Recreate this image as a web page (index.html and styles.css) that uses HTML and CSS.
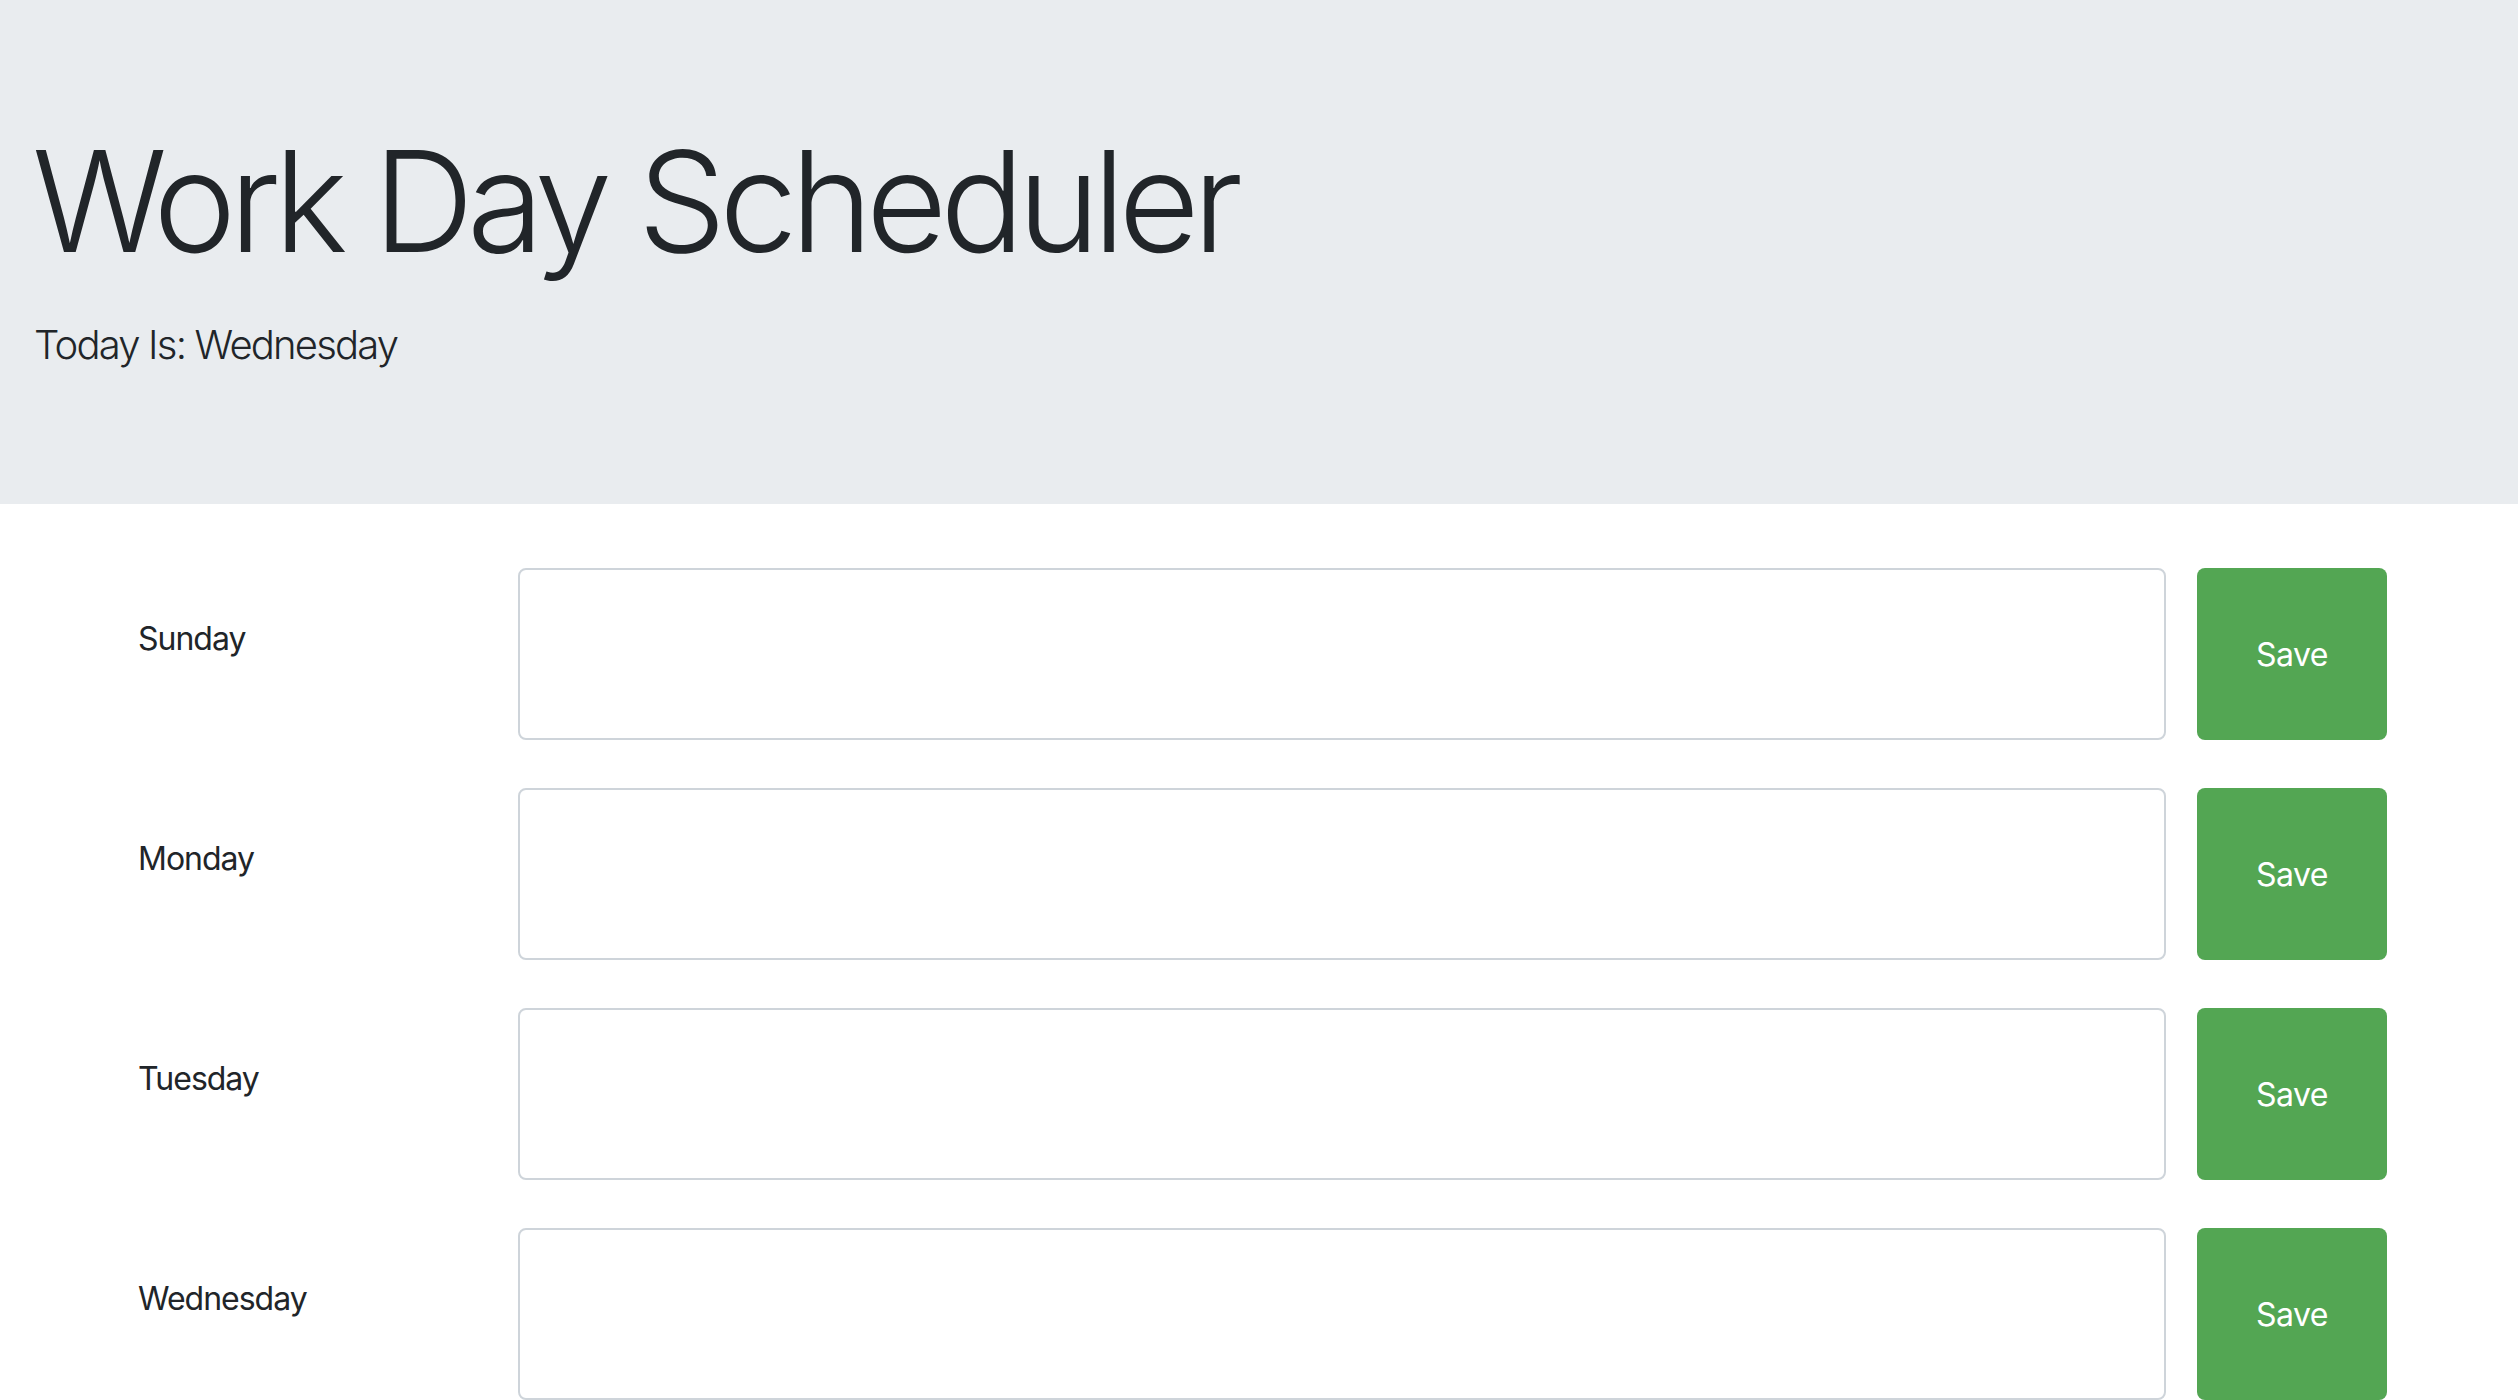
FILE: index.html
```html
<!DOCTYPE html>
<html lang="en">
<head>
<meta charset="utf-8">
<title>Work Day Scheduler</title>
<link rel="stylesheet" href="styles.css">
</head>
<body>
<header class="jumbotron">
  <h1 class="title">Work Day Scheduler</h1>
  <p class="lead">Today Is: Wednesday</p>
</header>
<main class="schedule">
  <div class="row">
    <div class="day">Sunday</div>
    <textarea class="entry"></textarea>
    <button class="save">Save</button>
  </div>
  <div class="row">
    <div class="day">Monday</div>
    <textarea class="entry"></textarea>
    <button class="save">Save</button>
  </div>
  <div class="row">
    <div class="day">Tuesday</div>
    <textarea class="entry"></textarea>
    <button class="save">Save</button>
  </div>
  <div class="row">
    <div class="day">Wednesday</div>
    <textarea class="entry"></textarea>
    <button class="save">Save</button>
  </div>
</main>
</body>
</html>
```

FILE: styles.css
```css
* { box-sizing: border-box; }
html, body { margin: 0; padding: 0; }
body {
  font-family: Inter, "Liberation Sans", sans-serif;
  color: #212529;
  background: #ffffff;
}
.jumbotron {
  background: #e9ecef;
  height: 504px;
  padding: 131px 0 0 32px;
}
.title {
  margin: 0;
  font-size: 140px;
  line-height: 140px;
  font-weight: 300;
  letter-spacing: -7px;
}
.lead {
  margin: 54px 0 0 2px;
  font-size: 40px;
  line-height: 40px;
  font-weight: 300;
  letter-spacing: -1.8px;
}
.schedule {
  padding: 64px 0 0 138px;
  display: flex;
  flex-direction: column;
  gap: 48px;
}
.row {
  display: grid;
  grid-template-columns: 380px 1648px 221px;
  height: 172px;
}
.day {
  padding-top: 55px;
  font-size: 32px;
  line-height: 32px;
  letter-spacing: -1px;
}
.entry {
  height: 172px;
  border: 2px solid #ced4da;
  border-radius: 8px;
  resize: none;
  background: #fff;
  margin: 0;
  width: 1648px;
}
.save {
  margin-left: 31px;
  width: 190px;
  height: 172px;
  border: none;
  border-radius: 8px;
  background: #53a653;
  color: #fff;
  font-family: Inter, "Liberation Sans", sans-serif;
  font-size: 32px;
  letter-spacing: -0.5px;
  padding: 0;
}
```
